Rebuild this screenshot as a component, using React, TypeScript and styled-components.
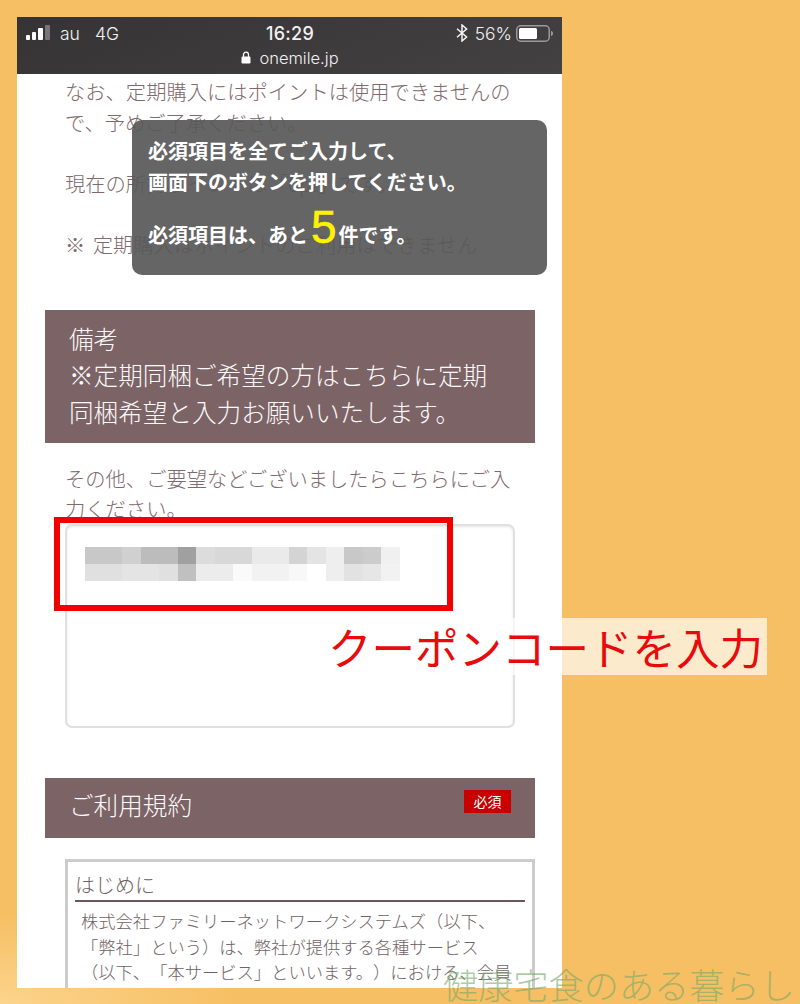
import React from 'react'
import styled, { createGlobalStyle } from 'styled-components'

const GlobalStyle = createGlobalStyle`
  html, body {
    margin: 0;
    padding: 0;
  }
  body {
    font-family: "Noto Sans CJK JP", "Noto Sans", sans-serif;
  }
`

const Page = styled.div`
  position: relative;
  width: 800px;
  height: 1004px;
  padding: 17px 0 0 17px;
  box-sizing: border-box;
  overflow: hidden;
  background:
    radial-gradient(ellipse 240px 90px at 0 100%, #fcd48c 0%, rgba(252, 212, 140, 0) 100%),
    #f6bf63;
`

const Phone = styled.div`
  position: relative;
  width: 545px;
  height: 971px;
  overflow: hidden;
  background: #fff;
`

const StatusBar = styled.header`
  height: 57px;
  box-sizing: border-box;
  padding: 4px 8px 0 9px;
  background: linear-gradient(160deg, #363334 0%, #434142 100%);
  color: #f2f1f1;
  font-family: Inter, "Liberation Sans", sans-serif;
  font-size: 17.5px;
`

const StatusRow = styled.div`
  display: grid;
  grid-template-columns: 1fr auto 1fr;
  align-items: center;
  height: 24px;
`

const StatusLeft = styled.div`
  display: flex;
  align-items: center;
`

const Carrier = styled.span`
  margin-left: 9px;
  font-weight: 300;
`

const Network = styled.span`
  margin-left: 15px;
  font-weight: 300;
`

const Clock = styled.span`
  font-size: 18px;
  font-weight: 500;
  letter-spacing: 0.3px;
`

const StatusRight = styled.div`
  display: flex;
  align-items: center;
  justify-content: flex-end;
  font-weight: 300;
`

const Percent = styled.span`
  margin: 0 4px 0 7px;
`

const UrlRow = styled.div`
  display: flex;
  align-items: center;
  justify-content: center;
  gap: 8px;
  height: 25px;
  font-size: 16.5px;
  font-weight: 300;
`

const Content = styled.main`
  padding: 2px 27px 0 28px;
`

const Paragraph = styled.p<{ $gap?: number }>`
  margin: 0 0 ${(p) => p.$gap ?? 0}px;
  padding: 0 24px 0 20px;
  color: #80696b;
  font-size: 20.3px;
  line-height: 30.6px;
  word-spacing: 3px;
  font-weight: 300;
`

const Accent = styled.span`
  color: #b3242a;
`

const SectionHead = styled.h2`
  position: relative;
  margin: 50px 0 0;
  padding: 10px 25px 14px 24px;
  background: #7b6366;
  color: #fbf9f9;
  font-size: 24.6px;
  line-height: 36.5px;
  font-weight: 300;
`

const TermsHead = styled(SectionHead)`
  height: 60px;
  box-sizing: border-box;
  padding-top: 8px;
  padding-bottom: 0;
`

const Required = styled.span`
  position: absolute;
  top: 12px;
  right: 24px;
  width: 47px;
  height: 23px;
  background: #c80000;
  color: #fff;
  font-size: 14px;
  line-height: 23px;
  text-align: center;
  font-weight: 400;
`

const Notice = styled(Paragraph)`
  margin-top: 20px;
  line-height: 30px;
`

const NoteField = styled.div`
  height: 204px;
  margin: 1px 20px 0;
  box-sizing: border-box;
  padding: 21px 18px;
  background: #fff;
  border: 2px solid #e0e0e0;
  border-radius: 7px;
  box-shadow: inset 0 1px 3px rgba(0, 0, 0, 0.1);
`

const Mosaic = styled.div`
  display: grid;
  grid-template-columns: repeat(17, 18.5px);
  grid-auto-rows: 17px;
`

const MosaicCell = styled.span<{ $shade: number }>`
  background: rgb(${(p) => p.$shade}, ${(p) => p.$shade}, ${(p) => p.$shade});
`

const TermsBox = styled.section`
  margin: 21px 0 0 20px;
  padding: 9px 7px 0;
  height: 140px;
  border: 3px solid #cccccc;
  border-bottom: 0;
`

const TermsTitle = styled.h3`
  margin: 0;
  height: 29px;
  border-bottom: 2px solid #6d5658;
  color: #6f6263;
  font-size: 20px;
  line-height: 27px;
  font-weight: 300;
`

const TermsBody = styled.p`
  margin: 6px 0 0 6px;
  color: #6f6263;
  font-size: 17.3px;
  line-height: 25.6px;
  font-weight: 300;
  white-space: nowrap;
  text-spacing-trim: space-all;
`

const Toast = styled.aside`
  position: absolute;
  top: 103px;
  left: 115px;
  width: 415px;
  height: 155px;
  box-sizing: border-box;
  padding: 15px 16px 0;
  border-radius: 10px;
  background: rgba(88, 88, 88, 0.92);
  color: #fff;
  font-size: 20px;
  font-weight: 700;
  line-height: 31px;
  text-spacing-trim: space-all;
`

const ToastCount = styled.div`
  display: flex;
  align-items: baseline;
  margin-top: 10px;
  line-height: 40px;
`

const CountNumber = styled.span`
  margin: 0 2px 0 3px;
  color: #fff200;
  font-family: "Liberation Sans", sans-serif;
  font-size: 46px;
  line-height: 40px;
  font-weight: 400;
  -webkit-text-stroke: 0.6px #fff200;
`

const Highlight = styled.div`
  position: absolute;
  top: 517px;
  left: 54px;
  width: 399px;
  height: 94px;
  box-sizing: border-box;
  border: 6px solid #f20000;
`

const Caption = styled.div`
  position: absolute;
  top: 618px;
  left: 328px;
  width: 439px;
  height: 57px;
  background: rgba(255, 255, 255, 0.68);
  color: #e80b0b;
  font-size: 43.5px;
  line-height: 57px;
  font-weight: 400;
  white-space: nowrap;
`

const Watermark = styled.div`
  position: absolute;
  top: 964px;
  left: 443px;
  color: rgba(118, 168, 105, 0.6);
  font-size: 35.2px;
  line-height: 40px;
  font-weight: 300;
  white-space: nowrap;
`

const mosaicShades = [
  200, 200, 208, 188, 188, 160, 220, 216, 216, 234, 234, 212, 228, 238, 200, 204, 240,
  224, 224, 228, 228, 224, 192, 236, 236, 250, 242, 242, 248, 255, 238, 226, 230, 242,
]

function SignalIcon() {
  return (
    <svg width="25" height="16" viewBox="0 0 25 16" aria-hidden="true">
      <rect x="0" y="10" width="4" height="5" rx="1" fill="#fff" />
      <rect x="6" y="7" width="4" height="8" rx="1" fill="#fff" />
      <rect x="12" y="3" width="5" height="12" rx="1" fill="#fff" />
      <rect x="19" y="0" width="5" height="15" rx="1" fill="#77757a" />
    </svg>
  )
}

function BluetoothIcon() {
  return (
    <svg width="12" height="18" viewBox="0 0 12 18" fill="none" aria-hidden="true">
      <path d="M1 4.8 10.6 13 6 17V1l4.6 4L1 13.2" stroke="#f4f4f4" strokeWidth="1.5" />
    </svg>
  )
}

function BatteryIcon() {
  return (
    <svg width="38" height="17" viewBox="0 0 38 17" aria-hidden="true">
      <rect x="0.75" y="0.75" width="32.5" height="15.5" rx="4" fill="none" stroke="#9b9a9a" strokeWidth="1.5" />
      <rect x="3" y="3" width="18" height="11" rx="1.5" fill="#fff" />
      <path d="M35 6c1.4.3 2 1.2 2 2.5s-.6 2.2-2 2.5z" fill="#9b9a9a" />
    </svg>
  )
}

function LockIcon() {
  return (
    <svg width="10" height="13" viewBox="0 0 10 13" aria-hidden="true">
      <path d="M2.5 6V3.7a2.5 2.5 0 0 1 5 0V6" fill="none" stroke="#fff" strokeWidth="1.3" />
      <rect x="0.5" y="5.5" width="9" height="7" rx="1.2" fill="#fff" />
    </svg>
  )
}

export default function App() {
  return (
    <Page>
      <GlobalStyle />
      <Phone>
        <StatusBar>
          <StatusRow>
            <StatusLeft>
              <SignalIcon />
              <Carrier>au</Carrier>
              <Network>4G</Network>
            </StatusLeft>
            <Clock>16:29</Clock>
            <StatusRight>
              <BluetoothIcon />
              <Percent>56%</Percent>
              <BatteryIcon />
            </StatusRight>
          </StatusRow>
          <UrlRow>
            <LockIcon />
            onemile.jp
          </UrlRow>
        </StatusBar>

        <Content>
          <Paragraph $gap={30.6}>
            なお、定期購入にはポイントは使用できませんので、予めご了承ください。
          </Paragraph>
          <Paragraph $gap={30.6}>
            現在の所持ポイントは「<Accent>0pt</Accent>」です。
          </Paragraph>
          <Paragraph>※ 定期購入はポイントのご利用はできません</Paragraph>

          <SectionHead>
            備考
            <br />
            ※定期同梱ご希望の方はこちらに定期同梱希望と入力お願いいたします。
          </SectionHead>

          <Notice>その他、ご要望などございましたらこちらにご入力ください。</Notice>
          <NoteField>
            <Mosaic>
              {mosaicShades.map((shade, i) => (
                <MosaicCell key={i} $shade={shade} />
              ))}
            </Mosaic>
          </NoteField>

          <TermsHead>
            ご利用規約
            <Required>必須</Required>
          </TermsHead>

          <TermsBox>
            <TermsTitle>はじめに</TermsTitle>
            <TermsBody>
              株式会社ファミリーネットワークシステムズ（以下、
              <br />
              「弊社」という）は、弊社が提供する各種サービス
              <br />
              （以下、「本サービス」といいます。）における、会員
            </TermsBody>
          </TermsBox>
        </Content>

        <Toast>
          必須項目を全てご入力して、
          <br />
          画面下のボタンを押してください。
          <ToastCount>
            必須項目は、あと<CountNumber>5</CountNumber>件です。
          </ToastCount>
        </Toast>
      </Phone>

      <Highlight />
      <Caption>クーポンコードを入力</Caption>
      <Watermark>健康宅食のある暮らし</Watermark>
    </Page>
  )
}
